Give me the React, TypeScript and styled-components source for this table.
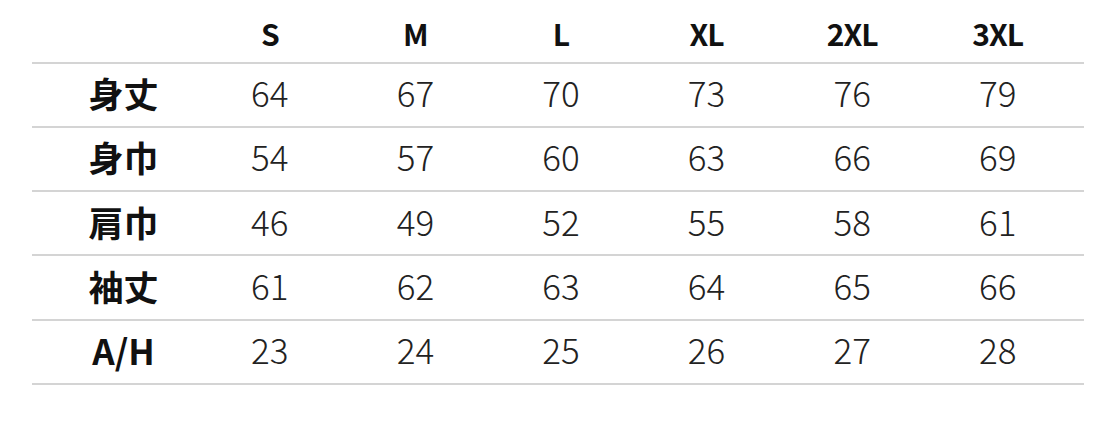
import styled, { createGlobalStyle } from 'styled-components'

const GlobalStyle = createGlobalStyle`
  html, body {
    margin: 0;
    padding: 0;
    background: #fff;
  }
  body {
    font-family: "Noto Sans CJK JP", "Noto Sans", sans-serif;
  }
`

const Table = styled.div`
  width: 1052px;
  margin-left: 32px;
`

const Row = styled.div<{ $head?: boolean }>`
  display: grid;
  grid-template-columns: 165px repeat(6, 145.6px) 1fr;
  align-items: center;
  height: ${(p) => (p.$head ? '61.5px' : '62.3px')};
  border-bottom: 2px solid #d4d4d4;
  box-sizing: content-box;
`

const HeadCell = styled.div`
  text-align: center;
  font-weight: bold;
  font-size: 30px;
  letter-spacing: -1px;
  color: #111;
  padding-top: 4px;
`

const Label = styled.div`
  text-align: center;
  padding-left: 18px;
  font-weight: bold;
  font-size: 35px;
  color: #111;
  padding-bottom: 4px;
`

const Value = styled.div`
  text-align: center;
  font-weight: 300;
  font-size: 35px;
  color: #222;
  padding-bottom: 6px;
`

const sizes = ['S', 'M', 'L', 'XL', '2XL', '3XL']

const rows: { label: string; values: number[] }[] = [
  { label: '身丈', values: [64, 67, 70, 73, 76, 79] },
  { label: '身巾', values: [54, 57, 60, 63, 66, 69] },
  { label: '肩巾', values: [46, 49, 52, 55, 58, 61] },
  { label: '袖丈', values: [61, 62, 63, 64, 65, 66] },
  { label: 'A/H', values: [23, 24, 25, 26, 27, 28] },
]

const App = () => {
  return (
    <>
      <GlobalStyle />
      <Table>
        <Row $head>
          <div />
          {sizes.map((s) => (
            <HeadCell key={s}>{s}</HeadCell>
          ))}
        </Row>
        {rows.map((r) => (
          <Row key={r.label}>
            <Label>{r.label}</Label>
            {r.values.map((v, i) => (
              <Value key={i}>{v}</Value>
            ))}
          </Row>
        ))}
      </Table>
    </>
  )
}

export default App
